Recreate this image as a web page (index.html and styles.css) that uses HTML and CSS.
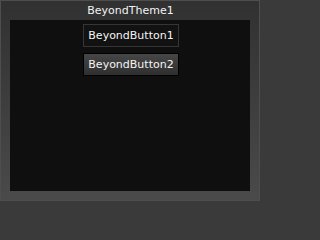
FILE: index.html
```html
<!DOCTYPE html>
<html>
<head>
<meta charset="utf-8">
<link rel="stylesheet" href="styles.css">
</head>
<body>
<div class="theme">
  <div class="title">BeyondTheme1</div>
  <div class="content">
    <div class="btn btn-flat">BeyondButton1</div>
    <div class="btn btn-raised">BeyondButton2</div>
  </div>
</div>
</body>
</html>
```
FILE: styles.css
```css
html, body {
  margin: 0;
  padding: 0;
  width: 260px;
  height: 201px;
  overflow: hidden;
  background: #3a3a3a;
}
.theme {
  box-sizing: border-box;
  width: 260px;
  height: 201px;
  border: 1px solid #4e4e4e;
  background: linear-gradient(#313131, #4a4a4a);
  display: flex;
  flex-direction: column;
  font-family: "DejaVu Sans", Verdana, sans-serif;
  font-size: 11px;
  color: #f2f2f2;
}
.title {
  height: 19px;
  line-height: 19px;
  text-align: center;
  padding-left: 1px;
}
.content {
  flex: 1;
  margin: 0 9px 9px 9px;
  background: #0f0f0f;
  display: flex;
  flex-direction: column;
  align-items: center;
  padding-top: 4px;
  gap: 6px;
}
.btn {
  box-sizing: border-box;
  width: 96px;
  height: 23px;
  line-height: 21px;
  text-align: center;
  margin-left: 2px;
  color: #f4f4f4;
}
.btn-flat {
  border: 1px solid #353535;
  background: #121212;
}
.btn-raised {
  border: 1px solid #000;
  background: linear-gradient(#464646, #2f2f2f);
}
```
